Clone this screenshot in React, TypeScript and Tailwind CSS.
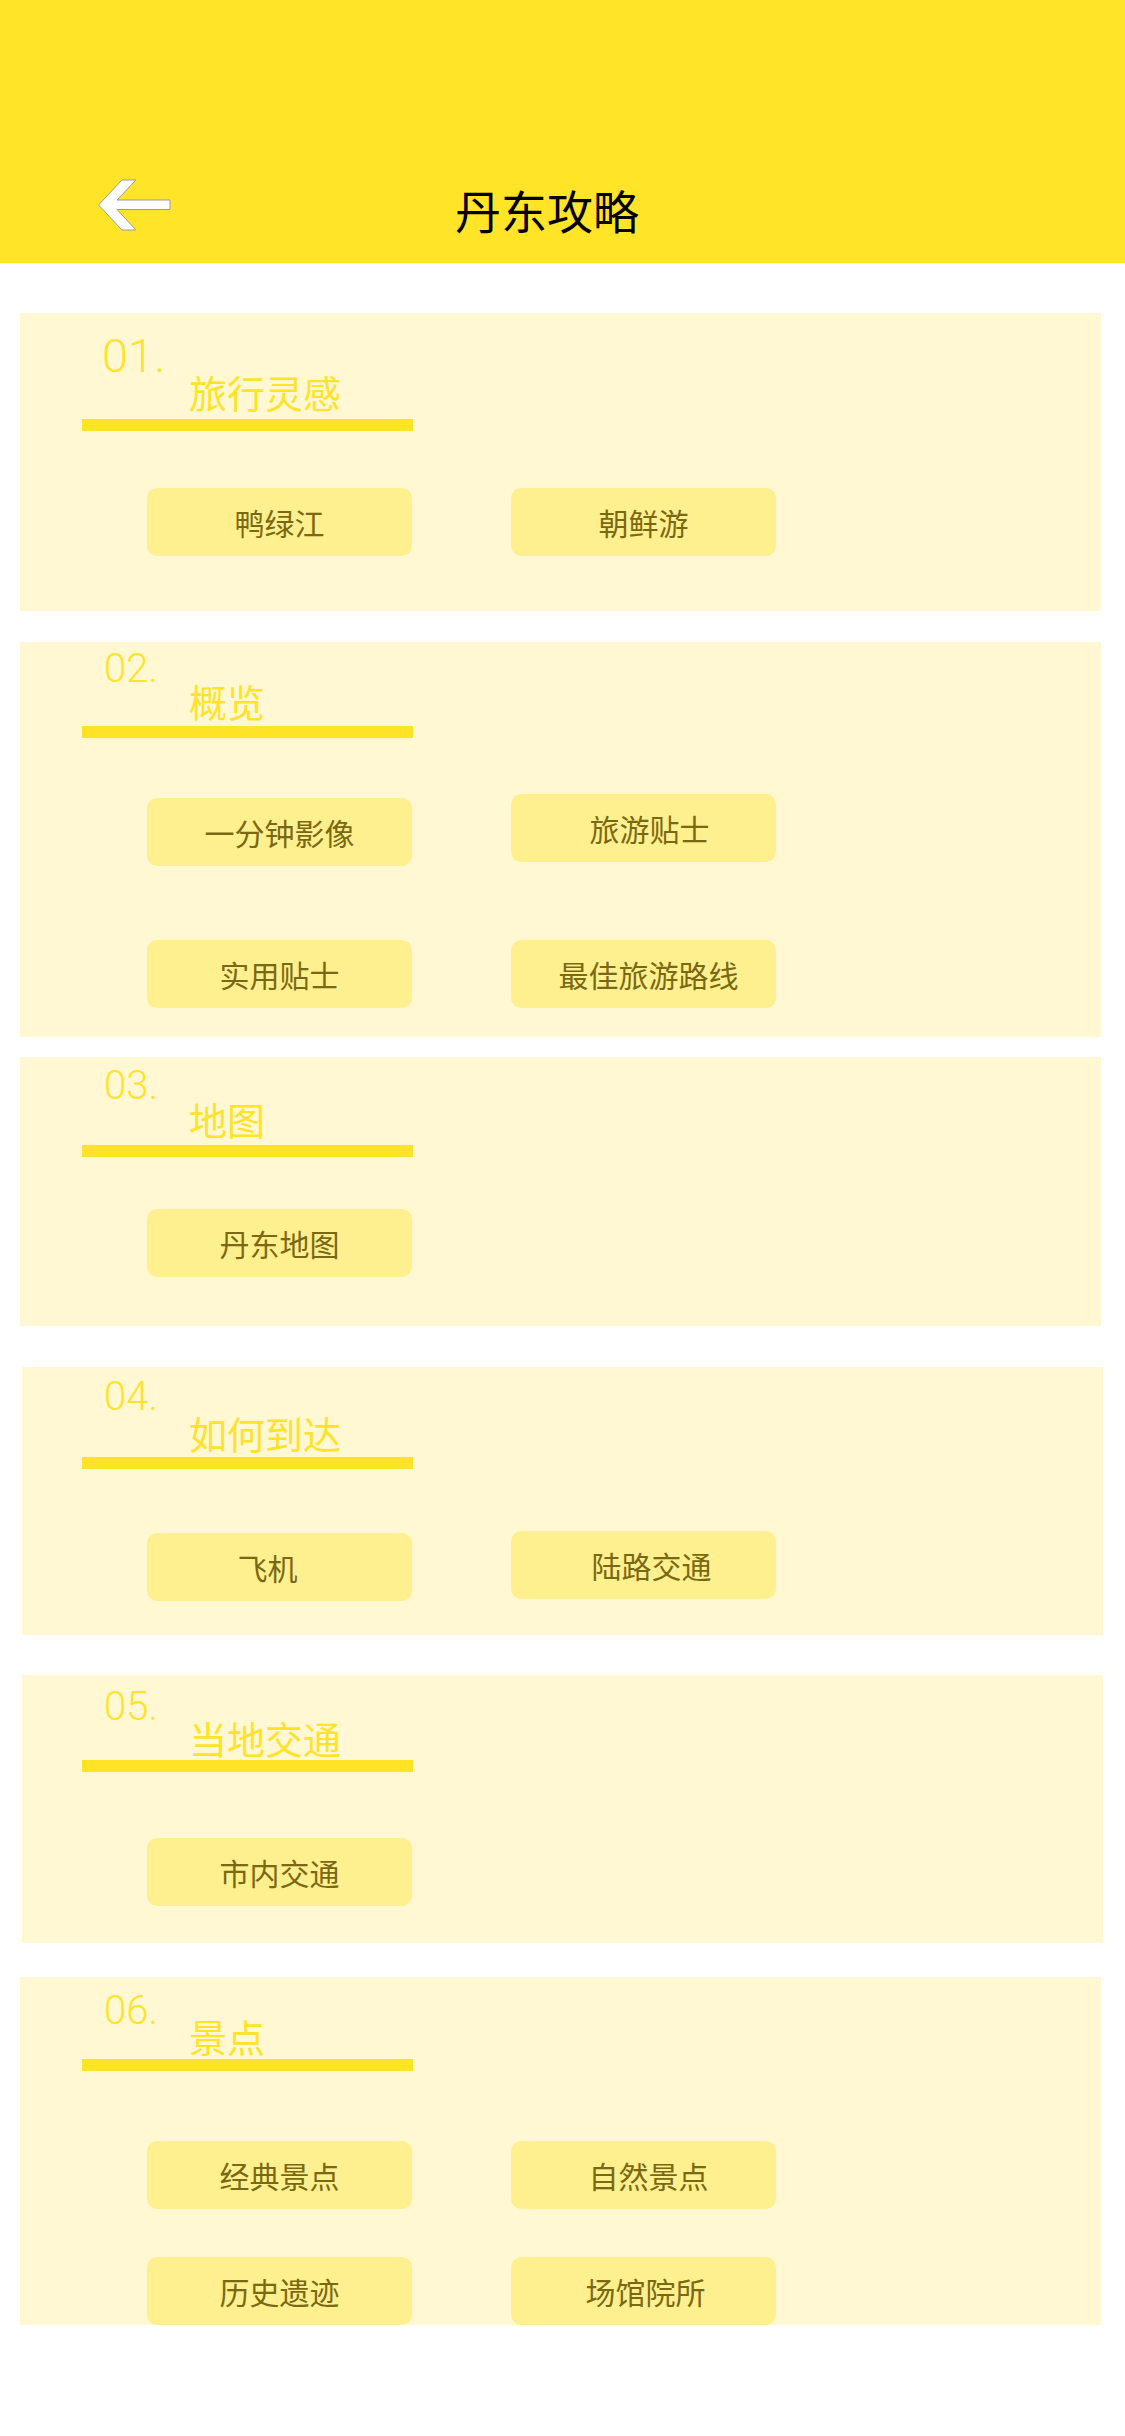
import React from "react";

type Btn = { label: string; cls?: string };

interface SectionData {
  num: string;
  title: string;
  cardCls: string;
  innerCls: string;
  numCls: string;
  titleCls: string;
  barCls: string;
  rows: { cls: string; items: Btn[] }[];
}

const cjk = "font-['Noto_Sans_CJK_SC','Noto_Sans',sans-serif]";

const sections: SectionData[] = [
  {
    num: "01.",
    title: "旅行灵感",
    cardCls: "mt-[50px] ml-[20px] h-[298px]",
    innerCls: "pt-[25px]",
    numCls: "text-[47px] ml-[82px]",
    titleCls: "mt-0",
    barCls: "mt-[9px]",
    rows: [{ cls: "mt-[57px]", items: [{ label: "鸭绿江" }, { label: "朝鲜游" }] }],
  },
  {
    num: "02.",
    title: "概览",
    cardCls: "mt-[31px] ml-[20px] h-[395px]",
    innerCls: "pt-[9px]",
    numCls: "text-[40px] ml-[84px]",
    titleCls: "-mt-[4px]",
    barCls: "mt-[7px]",
    rows: [
      { cls: "mt-[56px]", items: [{ label: "一分钟影像", cls: "mt-[4px]" }, { label: "旅游贴士", cls: "pl-[12px]" }] },
      { cls: "mt-[74px]", items: [{ label: "实用贴士" }, { label: "最佳旅游路线", cls: "pl-[10px]" }] },
    ],
  },
  {
    num: "03.",
    title: "地图",
    cardCls: "mt-[20px] ml-[20px] h-[269px]",
    innerCls: "pt-[11px]",
    numCls: "text-[40px] ml-[84px]",
    titleCls: "-mt-[3px]",
    barCls: "mt-[8px]",
    rows: [{ cls: "mt-[52px]", items: [{ label: "丹东地图" }] }],
  },
  {
    num: "04.",
    title: "如何到达",
    cardCls: "mt-[41px] ml-[22px] h-[268px]",
    innerCls: "pt-[12px] -ml-[2px]",
    numCls: "text-[40px] ml-[84px]",
    titleCls: "mt-0",
    barCls: "mt-[6px]",
    rows: [
      {
        cls: "mt-[62px]",
        items: [{ label: "飞机", cls: "mt-[2px] pr-[24px]" }, { label: "陆路交通", cls: "pl-[16px]" }],
      },
    ],
  },
  {
    num: "05.",
    title: "当地交通",
    cardCls: "mt-[40px] ml-[22px] h-[268px]",
    innerCls: "pt-[14px] -ml-[2px]",
    numCls: "text-[40px] ml-[84px]",
    titleCls: "-mt-[5px]",
    barCls: "mt-[4px]",
    rows: [{ cls: "mt-[66px]", items: [{ label: "市内交通" }] }],
  },
  {
    num: "06.",
    title: "景点",
    cardCls: "mt-[34px] ml-[20px] h-[348px]",
    innerCls: "pt-[16px]",
    numCls: "text-[40px] ml-[84px]",
    titleCls: "-mt-[11px]",
    barCls: "mt-[5px]",
    rows: [
      { cls: "mt-[70px]", items: [{ label: "经典景点" }, { label: "自然景点", cls: "pl-[10px]" }] },
      { cls: "mt-[48px]", items: [{ label: "历史遗迹" }, { label: "场馆院所", cls: "pl-[4px]" }] },
    ],
  },
];

const BackArrow = () => (
  <svg width="74" height="52" viewBox="97 179 74 52" className="shrink-0">
    <path
      d="M98.5 205 L122 180 L136 180 L117 200 L170 200 L170 209.5 L117 209.5 L136 230 L122 230 Z"
      fill="#ffffff"
      stroke="#9b9b9b"
      strokeWidth="1"
      strokeLinejoin="miter"
    />
  </svg>
);

const Section = ({ data }: { data: SectionData }) => (
  <div className={`${data.cardCls} w-[1081px] bg-[#fff8d3]`}>
    <div className={data.innerCls}>
      <div
        className={`${data.numCls} h-[36px] leading-[36px] font-['Roboto','Liberation_Sans',sans-serif] font-light text-[#ffe22a]`}
      >
        {data.num}
      </div>
      <div
        className={`${data.titleCls} ml-[169px] h-[36px] leading-[36px] text-[38px] font-normal text-[#ffe22a] ${cjk}`}
      >
        {data.title}
      </div>
      <div className={`${data.barCls} ml-[62px] w-[331px] h-[12px] bg-[#ffe326]`} />
      {data.rows.map((row, i) => (
        <div key={i} className={`${row.cls} ml-[127px] flex items-start gap-[99px]`}>
          {row.items.map((b) => (
            <div
              key={b.label}
              className={`${b.cls ?? ""} w-[265px] h-[68px] rounded-[10px] bg-[#fff08f] flex items-center justify-center text-[30px] text-[#7a6912] ${cjk}`}
            >
              {b.label}
            </div>
          ))}
        </div>
      ))}
    </div>
  </div>
);

export default function App() {
  return (
    <div className="w-[1125px] min-h-[2436px] bg-white">
      <div className="h-[263px] bg-[#ffe428] pt-[179px]">
        <div className="flex items-center h-[52px] pl-[97px]">
          <BackArrow />
          <div className={`ml-[284px] mt-[8px] text-[46px] leading-[52px] text-black ${cjk}`}>
            丹东攻略
          </div>
        </div>
      </div>
      {sections.map((s) => (
        <Section key={s.num} data={s} />
      ))}
    </div>
  );
}
